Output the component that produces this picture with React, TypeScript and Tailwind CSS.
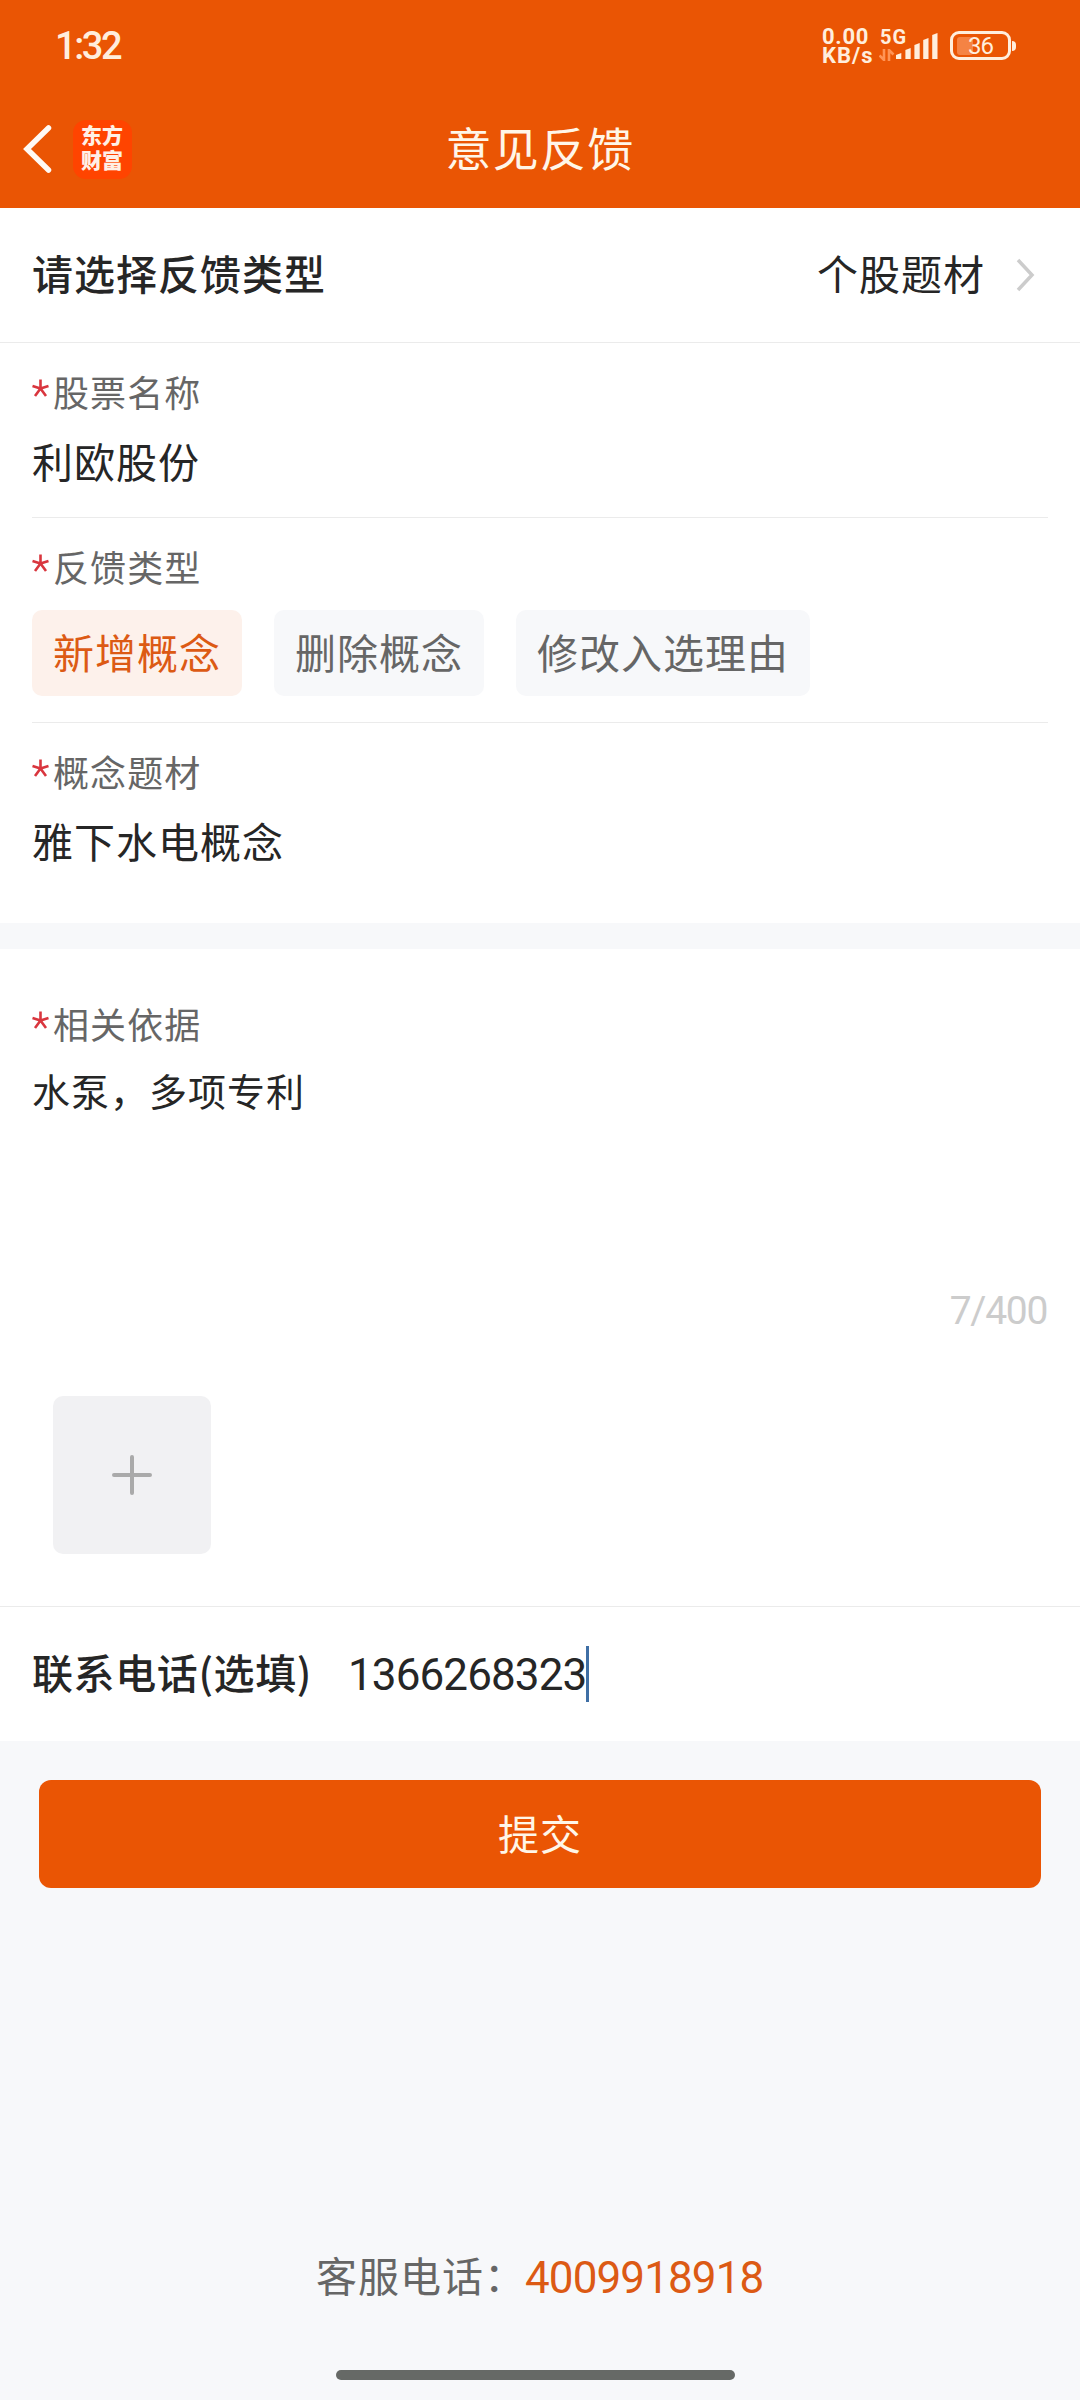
import { useState } from 'react'

const TYPES = ['新增概念', '删除概念', '修改入选理由']

const SIGNAL_BARS = [
  { x: 0, h: 6 },
  { x: 9.4, h: 11 },
  { x: 18.4, h: 16 },
  { x: 27.2, h: 21 },
  { x: 36.2, h: 26 },
]

const Label = ({ children }: any) => (
  <div className="flex h-[48px] items-center text-[36px] leading-[48px] tracking-[1.1px] text-[#666666]">
    <svg className="mr-[4px] mt-[-10px]" width="17" height="18" viewBox="0 0 17 18" stroke="#d9363e" strokeWidth="2.6">
      <path d="M8.500 9.500V0.500M8.500 9.500L0.500 7M8.500 9.500L16.500 7M8.500 9.500L3 17M8.500 9.500L14 17" />
    </svg>
    <span className="mt-[-4px] whitespace-nowrap">{children}</span>
  </div>
)

const StatusBar = () => (
  <div className="flex h-[90px] items-start pl-[55px] font-['Roboto'] text-[#ffeedd]">
    <span className="mt-[24px] w-[767px] text-[38px] font-medium leading-[44px] tracking-[-2.4px]">1:32</span>
    <div className="mt-[27px] w-[57px] text-[22px] font-bold leading-[19px]">
      <p className="h-[19px] tracking-[0.7px]">0.00</p>
      <p className="h-[19px]">KB/s</p>
    </div>
    <div className="relative h-[90px] w-[71px]">
      <span className="absolute left-[1px] top-[27px] text-[20px] font-bold leading-[20px]">5G</span>
      <svg className="absolute left-0 top-[49px]" width="16" height="12" viewBox="0 0 16 12">
        <path d="M5 0v11L0.5 6.5M10 12V1l4.5 4.5" fill="none" stroke="#ff9455" strokeWidth="2.6" />
      </svg>
      <svg className="absolute left-[17px] top-[33px]" width="42" height="26" viewBox="0 0 42 26">
        {SIGNAL_BARS.map((b) => (
          <path key={b.x} d={`M${b.x} 26V${28 - b.h}L${b.x + 5.3} ${26 - b.h}V26z`} fill="#ffeedd" />
        ))}
      </svg>
    </div>
    <div className="mt-[31px] flex items-center">
      <div className="relative flex h-[29px] w-[61px] items-center justify-center rounded-[9px] border-[3px] border-[#ffeedd]">
        <div className="absolute left-[4px] top-[3px] h-[18px] w-[16px] rounded-[3px] bg-[#f58344]" />
        <span className="relative mt-[2px] text-[24px] leading-[23px] tracking-[-1px]">36</span>
      </div>
      <div className="ml-[1px] h-[10px] w-[4px] rounded-r-full bg-[#ffeedd]" />
    </div>
  </div>
)

const NavBar = () => (
  <div className="grid h-[118px] grid-cols-3 items-center">
    <div className="flex items-center pl-[22px]">
      <svg width="32" height="50" viewBox="0 0 32 50" fill="none" stroke="#fffaf5" strokeWidth="5.5" strokeLinecap="round">
        <path d="M26.500 4L5 25L26.500 46" />
      </svg>
      <div className="ml-[19px] flex h-[59px] w-[59px] flex-col items-center justify-center rounded-[13px] bg-[#ff4400] pb-[5px] pr-[1px] text-[21px] font-black leading-[25px] tracking-normal text-[#fff0e6]">
        <span>东方</span>
        <span>财富</span>
      </div>
    </div>
    <h1 className="mt-[-7px] whitespace-nowrap text-center text-[46px] leading-[60px] tracking-[1.2px] text-[#fff6e8]">意见反馈</h1>
  </div>
)

export default function App() {
  const [selected, setSelected] = useState(TYPES[0])

  return (
    <div className="flex h-[2400px] w-[1080px] flex-col bg-[#f7f8fa] font-['Noto_Sans_CJK_SC',sans-serif] text-[41px] leading-[56px] tracking-[1px] text-[#262626]">
      <header className="h-[208px] bg-[#ea5504]">
        <StatusBar />
        <NavBar />
      </header>

      {/* Feedback category */}
      <div className="flex h-[135px] items-center justify-between border-b border-[#ebebeb] bg-white pl-[32px] pr-[43px]">
        <span className="mt-[-6px] font-medium">请选择反馈类型</span>
        <div className="flex items-center">
          <span className="mt-[-6px]">个股题材</span>
          <svg className="ml-[30px]" width="22" height="36" viewBox="0 0 22 36" fill="none" stroke="#cccccc" strokeWidth="3.5">
            <path d="M3 3L17 18L3 33" />
          </svg>
        </div>
      </div>

      {/* Stock and concept */}
      <section className="h-[580px] bg-white px-[32px]">
        <div className="h-[175px] border-b border-[#ebebeb] pt-[26px]">
          <Label>股票名称</Label>
          <p className="mt-[15px]">利欧股份</p>
        </div>
        <div className="h-[205px] border-b border-[#ebebeb] pt-[26px]">
          <Label>反馈类型</Label>
          <div className="mt-[18px] flex gap-[32px]">
            {TYPES.map((t) => (
              <button
                key={t}
                onClick={() => setSelected(t)}
                className={`h-[86px] rounded-[10px] px-[21px] pb-[5px] ${
                  t === selected ? 'bg-[#fdf1eb] text-[#dc5a14]' : 'bg-[#f7f8fa] text-[#666666]'
                }`}
              >
                {t}
              </button>
            ))}
          </div>
        </div>
        <div className="pt-[26px]">
          <Label>概念题材</Label>
          <p className="mt-[15px]">雅下水电概念</p>
        </div>
      </section>

      {/* Evidence */}
      <section className="mt-[26px] h-[658px] border-b border-[#ebebeb] bg-white px-[32px] pt-[52px]">
        <Label>相关依据</Label>
        <p className="mt-[15px] h-[222px] text-[38px] leading-[52px]">水泵，多项专利</p>
        <p className="h-[50px] pr-[1px] text-right font-['Roboto'] text-[39px] leading-[50px] tracking-[-1.3px] text-[#cccccc]">7/400</p>
        <button className="ml-[21px] mt-[60px] flex h-[158px] w-[158px] items-center justify-center rounded-[10px] bg-[#f1f1f3]">
          <svg width="42" height="42" viewBox="0 0 42 42" stroke="#aaaaaa" strokeWidth="4" strokeLinecap="round">
            <path d="M21 3V39M3 21H39" />
          </svg>
        </button>
      </section>

      {/* Contact phone */}
      <div className="flex h-[134px] items-center bg-white pl-[32px]">
        <span className="mt-[-6px] w-[316px] whitespace-nowrap font-medium tracking-[0.600px]">联系电话(选填)</span>
        <span className="mt-[2px] font-['Roboto'] text-[44px] tracking-[-0.9px]">1366268323</span>
        <span className="h-[56px] w-[3px] bg-[#3f6fa5]" />
      </div>

      <button className="mx-[39px] mt-[39px] h-[108px] rounded-[12px] bg-[#ea5504] pb-[5px] text-[#fff6e8]">提交</button>

      <div className="mt-auto flex h-[56px] items-center pl-[316px] text-[#666666]">
        <span className="mt-[-6px] w-[209px] whitespace-nowrap">客服电话：</span>
        <span className="mt-[2px] font-['Roboto'] text-[44px] tracking-[-0.9px] text-[#dc5a14]">4009918918</span>
      </div>
      <div className="mb-[20px] ml-[336px] mt-[65px] h-[10px] w-[399px] rounded-full bg-[#666966]" />
    </div>
  )
}
